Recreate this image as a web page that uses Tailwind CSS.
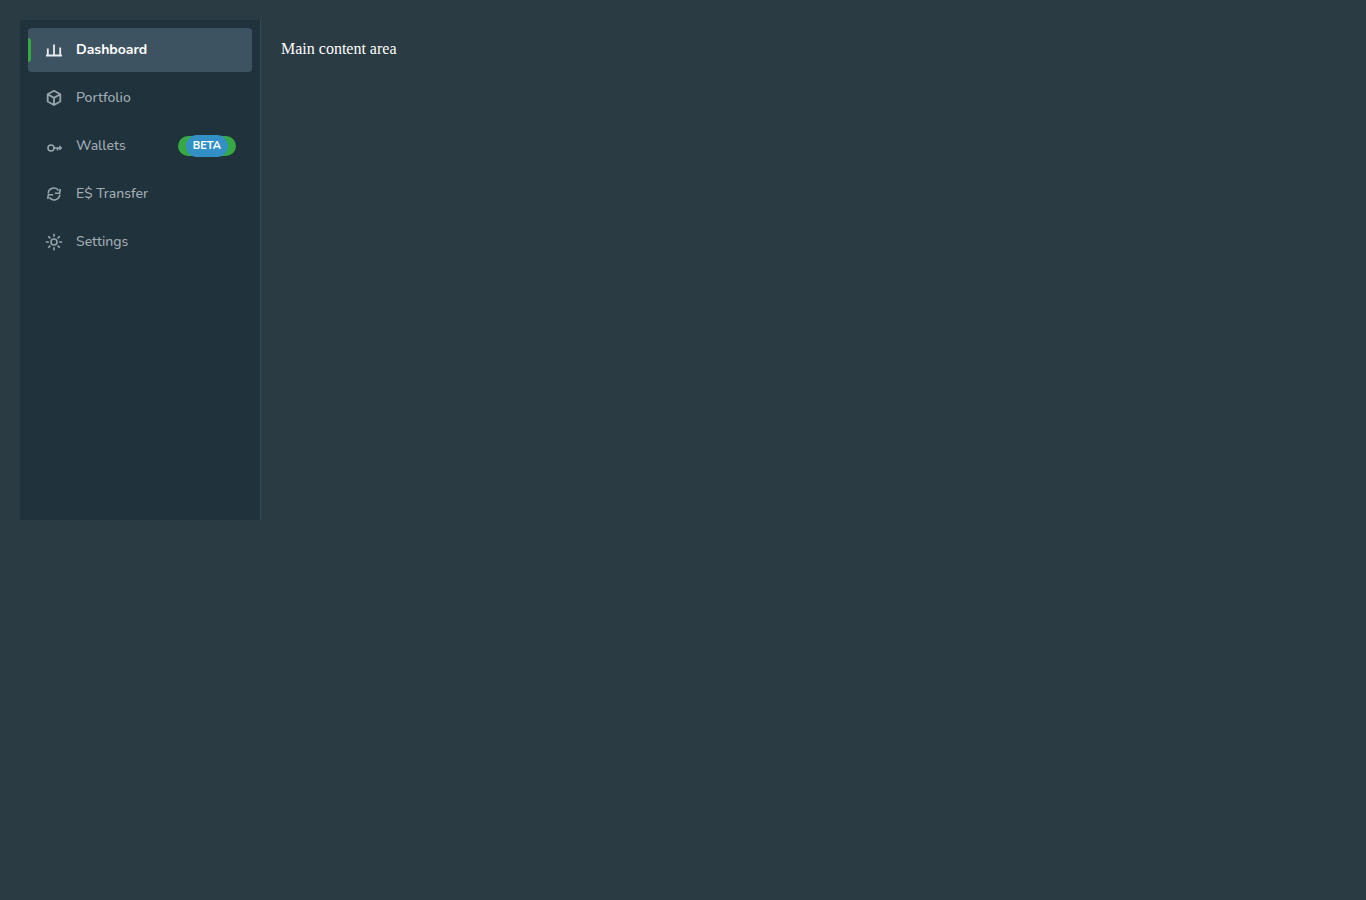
<!DOCTYPE html>
<html lang="en">
<head>
<meta charset="utf-8">
<title>Dashboard</title>
<script src="https://cdn.jsdelivr.net/npm/@tailwindcss/browser@4"></script>
</head>
<body class="min-h-screen bg-[#2b3b43] p-5 font-[Nunito,'Open_Sans',sans-serif] text-sm leading-5">
<div class="flex min-h-[500px]">
  <aside class="w-[241px] shrink-0 border-r border-[#3b4b55] bg-[#20323c] p-2">
    <nav aria-label="Main">
      <ul class="flex flex-col gap-1 font-medium text-[#a0acb4]">
        <li>
          <a href="#" aria-current="page" class="relative flex h-11 items-center gap-3 rounded bg-[#3d5362] px-4 font-bold text-white">
            <span class="absolute top-1/2 left-0 h-6 w-[3px] -translate-y-1/2 rounded-r-sm bg-[#37a846]"></span>
            <svg class="size-5" viewBox="0 0 20 20" fill="none" stroke="#e8edf0" stroke-width="1.8" aria-hidden="true"><path d="M2 15.500h16M3.800 15.500V8.500M10 15.500V4.500M16.200 15.500V7.500"/></svg>
            <span class="pb-px">Dashboard</span>
          </a>
        </li>
        <li>
          <a href="#" class="flex h-11 items-center gap-3 rounded px-4">
            <svg class="size-5" viewBox="0 0 20 20" fill="none" stroke="#98a5ad" stroke-width="1.8" stroke-linejoin="round" aria-hidden="true"><path d="M10 2.800l6.300 3.500v7.200L10 17l-6.300-3.500V6.300zM3.700 6.300L10 9.900l6.300-3.600M10 9.900V17"/></svg>
            <span class="pb-px">Portfolio</span>
          </a>
        </li>
        <li>
          <a href="#" class="flex h-11 items-center gap-3 rounded px-4">
            <svg class="size-5" viewBox="0 0 20 20" fill="none" stroke="#98a5ad" stroke-width="1.6" aria-hidden="true"><circle cx="7" cy="12" r="3"/><path d="M10 12h8M13.500 12v2.500M16 9.800V14"/></svg>
            <span class="pb-px">Wallets</span>
            <span class="ml-auto flex h-5 items-center rounded-full bg-[#37a846] px-2"><span class="rounded-full bg-[#3390c4] px-[7px] py-px text-[11px] leading-5 font-bold text-white">BETA</span></span>
          </a>
        </li>
        <li>
          <a href="#" class="flex h-11 items-center gap-3 rounded px-4">
            <svg class="size-5" viewBox="0 0 20 20" fill="none" stroke="#98a5ad" stroke-width="1.6" stroke-linejoin="round" aria-hidden="true"><path d="M4.200 9.500A5.800 5.800 0 0 1 14.600 6.400M16.300 5L15.600 9.300H10.800M15.800 10.500A5.800 5.800 0 0 1 5.400 13.600M3.700 15L4.400 10.700H9.200"/></svg>
            <span class="pb-px">E$ Transfer</span>
          </a>
        </li>
        <li>
          <a href="#" class="flex h-11 items-center gap-3 rounded px-4">
            <svg class="size-5" viewBox="0 0 20 20" fill="none" stroke="#98a5ad" stroke-width="1.6" aria-hidden="true"><circle cx="10" cy="10" r="3"/><path d="M10 1.800v3M10 15.200v3M1.800 10h3M15.200 10h3M4.200 4.200l2.200 2.200M13.600 13.600l2.200 2.200M15.800 4.200l-2.200 2.200M6.400 13.600l-2.200 2.200"/></svg>
            <span class="pb-px">Settings</span>
          </a>
        </li>
      </ul>
    </nav>
  </aside>
  <main class="flex-1 p-5 font-['Liberation_Serif',serif] text-base leading-[18px] text-white">Main content area</main>
</div>
</body>
</html>
